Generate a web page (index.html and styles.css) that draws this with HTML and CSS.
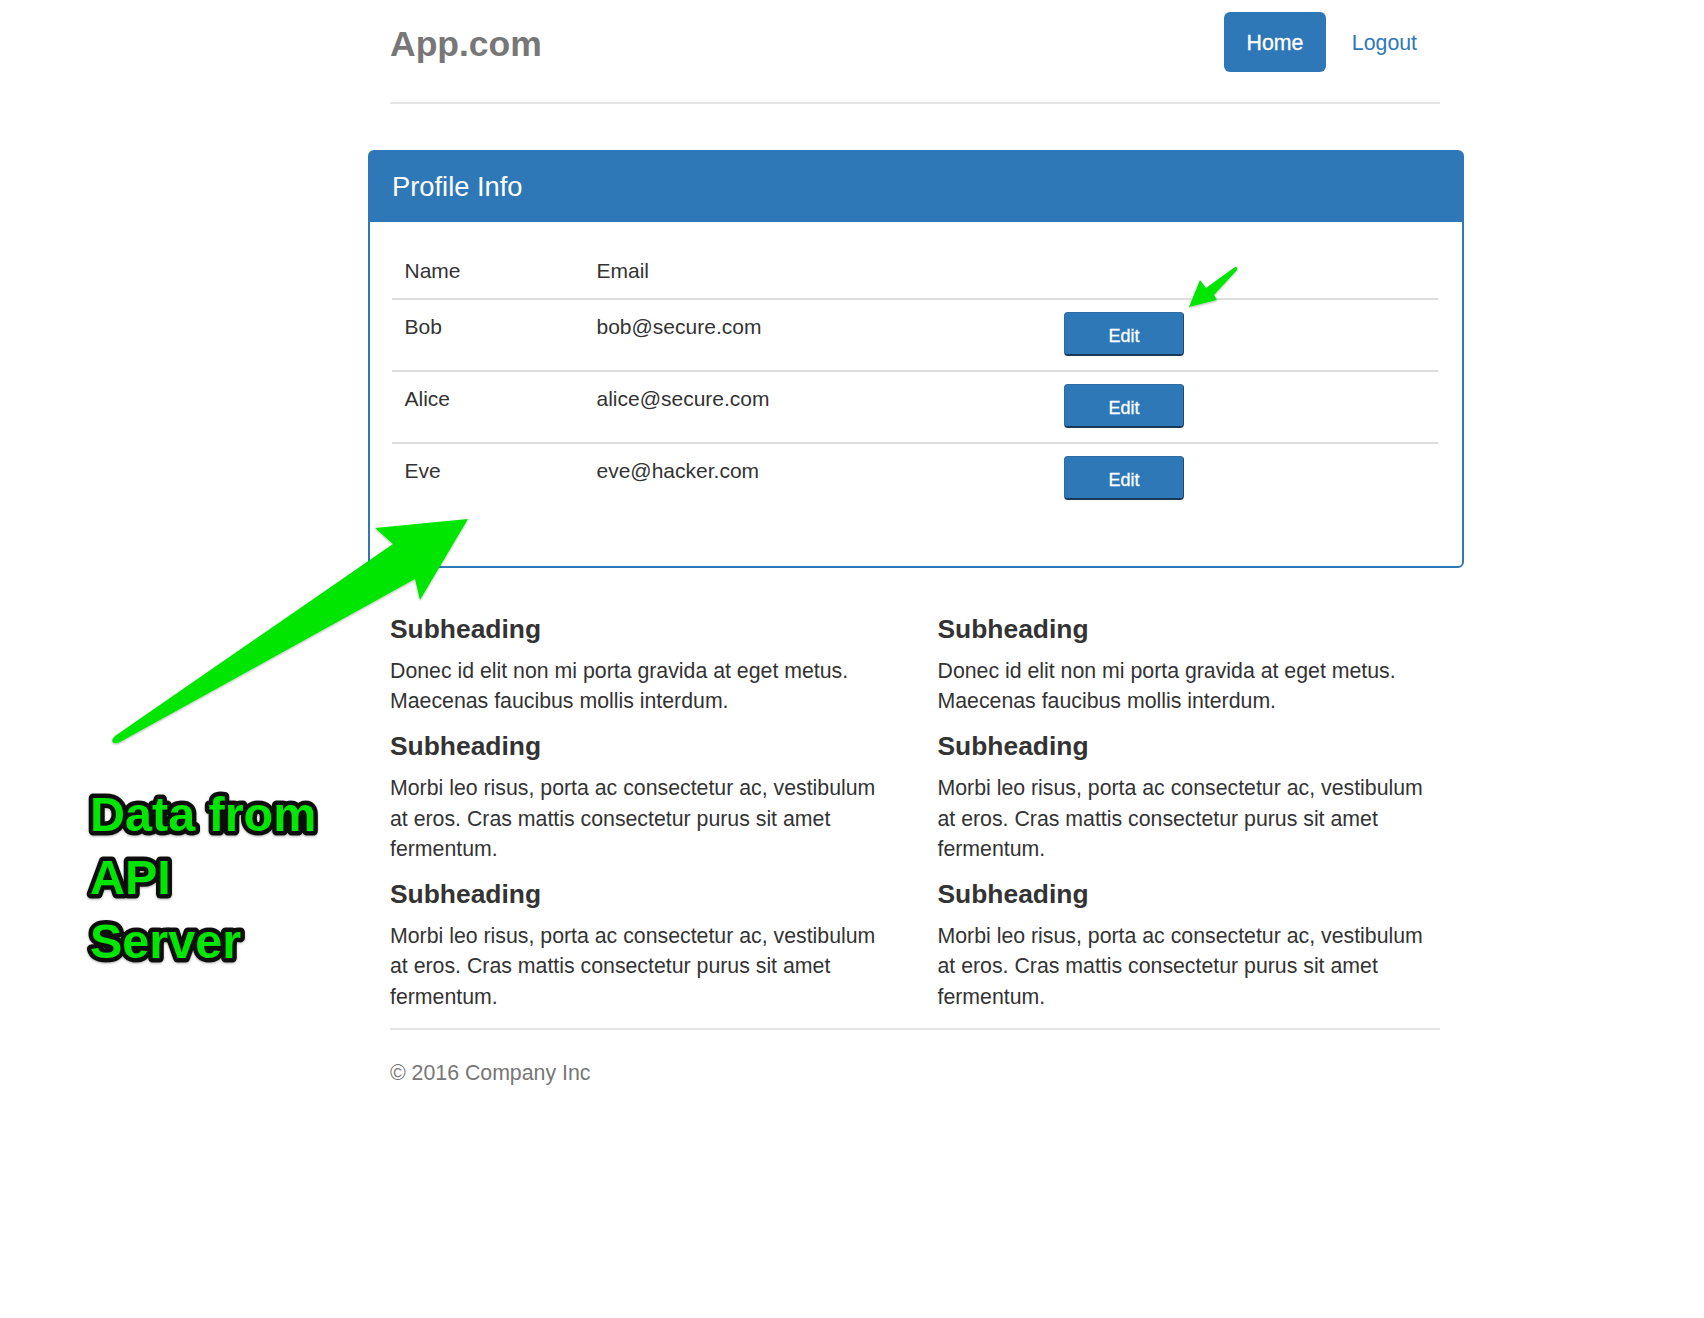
FILE: index.html
```html
<!DOCTYPE html>
<html lang="en">
<head>
    <meta charset="UTF-8">
    <title>App.com</title>
    <link rel="stylesheet" href="styles.css">
</head>
<body>

<div class="container">
    <div class="header">
        <h3 class="brand">App.com</h3>
        <nav class="nav">
            <a class="nav-link active" href="#">Home</a>
            <a class="nav-link" href="#">Logout</a>
        </nav>
    </div>

    <div class="panel">
        <div class="panel-heading">Profile Info</div>
        <div class="panel-body">
            <table class="table">
                <tr>
                    <td class="col-name">Name</td>
                    <td class="col-email">Email</td>
                    <td></td>
                </tr>
                <tr>
                    <td>Bob</td>
                    <td>bob@secure.com</td>
                    <td><button class="btn">Edit</button></td>
                </tr>
                <tr>
                    <td>Alice</td>
                    <td>alice@secure.com</td>
                    <td><button class="btn">Edit</button></td>
                </tr>
                <tr>
                    <td>Eve</td>
                    <td>eve@hacker.com</td>
                    <td><button class="btn">Edit</button></td>
                </tr>
            </table>
        </div>
    </div>

    <div class="marketing">
        <div class="column">
            <h4>Subheading</h4>
            <p>Donec id elit non mi porta gravida at eget metus. Maecenas faucibus mollis interdum.</p>
            <h4>Subheading</h4>
            <p>Morbi leo risus, porta ac consectetur ac, vestibulum at eros. Cras mattis consectetur purus sit amet fermentum.</p>
            <h4>Subheading</h4>
            <p>Morbi leo risus, porta ac consectetur ac, vestibulum at eros. Cras mattis consectetur purus sit amet fermentum.</p>
        </div>
        <div class="column">
            <h4>Subheading</h4>
            <p>Donec id elit non mi porta gravida at eget metus. Maecenas faucibus mollis interdum.</p>
            <h4>Subheading</h4>
            <p>Morbi leo risus, porta ac consectetur ac, vestibulum at eros. Cras mattis consectetur purus sit amet fermentum.</p>
            <h4>Subheading</h4>
            <p>Morbi leo risus, porta ac consectetur ac, vestibulum at eros. Cras mattis consectetur purus sit amet fermentum.</p>
        </div>
    </div>

    <div class="footer">© 2016 Company Inc</div>
</div>

<!-- green annotations drawn on top of the screenshot -->
<svg class="notes" width="1704" height="1318" viewBox="0 0 1704 1318">
    <defs>
        <filter id="soft" x="-10%" y="-10%" width="120%" height="120%">
            <feDropShadow dx="0" dy="1" stdDeviation="1" flood-color="#000" flood-opacity="0.3"/>
        </filter>
    </defs>
    <path filter="url(#soft)" fill="#00e600" d="M468 519 L375 528 L393 544 L115 736 Q110 741 114 743 Q117 744 120 742 L415 579 L420 600 Z"/>
    <path filter="url(#soft)" fill="#00e600" d="M1189 307 L1200 280 L1206 288 L1235 267 Q1238 267 1237 270 L1214 295 L1217 300 Z"/>
    <g filter="url(#soft)">
        <text class="callout" x="90" y="831">Data from</text>
        <text class="callout" x="90" y="894">API</text>
        <text class="callout" x="90" y="958">Server</text>
    </g>
</svg>

</body>
</html>
```

FILE: styles.css
```css
body {
    margin: 0;
    background-color: #fff;
    color: #333;
    font-family: "Liberation Sans", Arial, sans-serif;
    font-size: 21.3px;
    line-height: 30.4px;
}
.container {
    width: 1050px;
    margin-left: 390px;
}
.header {
    display: flex;
    justify-content: space-between;
    height: 102px;
    border-bottom: 2px solid #e5e5e5;
}
.brand {
    margin: 0;
    padding-top: 23px;
    font-size: 35.5px;
    line-height: 42px;
    font-weight: 700;
    color: #777;
}
.nav {
    display: flex;
    align-items: flex-start;
    gap: 3px;
    padding-top: 12px;
}
.nav-link {
    display: block;
    height: 60px;
    padding: 0 23px;
    line-height: 62px;
    border-radius: 6px;
    color: #2f78b7;
    text-decoration: none;
}
.nav-link.active {
    padding: 0 22.5px;
    background-color: #2f78b7;
    color: #fff;
    -webkit-text-stroke: 0.3px #fff;
}
.panel {
    width: 1096px;
    height: 418px;
    margin: 46px 0 0 -22px;
    box-sizing: border-box;
    border: 2px solid #2f78b7;
    border-radius: 6px;
}
.panel-heading {
    height: 70px;
    padding-left: 22px;
    background-color: #2f78b7;
    color: #fff;
    font-size: 27.3px;
    line-height: 70px;
}
.panel-body {
    padding: 22px 22px 0 22px;
}
.table {
    width: 1046px;
    border-collapse: collapse;
    font-size: 21px;
}
.table td {
    height: 72px;
    box-sizing: border-box;
    padding: 12px 12px 12px 12.5px;
    vertical-align: top;
    border-top: 2px solid #ddd;
}
.table tr:first-child td {
    height: 55px;
    padding-top: 12px;
    padding-bottom: 11px;
    border-top: none;
}
.col-name {
    width: 192px;
}
.col-email {
    width: 468px;
}
.btn {
    display: block;
    width: 120px;
    height: 44px;
    margin-left: -0.5px;
    padding: 5px 0 0 0;
    background-color: #2f78b7;
    border: 1px solid #2a6ca6;
    border-right-color: #1b4a73;
    border-bottom: 2px solid #173a5a;
    border-radius: 4px;
    color: #fff;
    font-family: inherit;
    font-size: 18px;
    -webkit-text-stroke: 0.3px #fff;
}
.marketing {
    display: flex;
    gap: 45px;
    margin-top: 46px;
}
.column {
    width: 503px;
}
.column h4 {
    margin: 0;
    font-size: 26.4px;
    line-height: 30px;
    font-weight: 700;
}
.column p {
    margin: 12px 0 14.5px 0;
}
.footer {
    margin-top: 1px;
    padding-top: 28px;
    border-top: 2px solid #e5e5e5;
    color: #777;
}
.notes {
    position: absolute;
    top: 0;
    left: 0;
    pointer-events: none;
}
.callout {
    font-size: 48.5px;
    font-weight: 700;
    fill: #00e600;
    stroke: #111;
    stroke-width: 9px;
    stroke-linejoin: round;
    paint-order: stroke fill;
}
```
